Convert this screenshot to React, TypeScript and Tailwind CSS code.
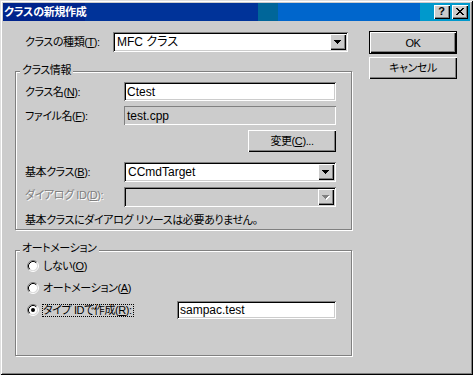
import React from "react";

const raised =
  "bg-[#cccccc] shadow-[inset_1px_1px_0_#ffffff,inset_-1px_-1px_0_#000000,inset_-2px_-2px_0_#808080]";
const sunken =
  "shadow-[inset_1px_1px_0_#808080,inset_-1px_-1px_0_#ffffff,inset_2px_2px_0_#000000,inset_-2px_-2px_0_#cccccc]";

function Arrow({ disabled }: { disabled?: boolean }) {
  const c = disabled ? "#808080" : "#000000";
  return (
    <svg width="8" height="5" viewBox="0 0 8 5" shapeRendering="crispEdges">
      {disabled && (
        <g fill="#ffffff">
          <rect x="1" y="1" width="7" height="1" />
          <rect x="2" y="2" width="5" height="1" />
          <rect x="3" y="3" width="3" height="1" />
          <rect x="4" y="4" width="1" height="1" />
        </g>
      )}
      <g fill={c}>
        <rect x="0" y="0" width="7" height="1" />
        <rect x="1" y="1" width="5" height="1" />
        <rect x="2" y="2" width="3" height="1" />
        <rect x="3" y="3" width="1" height="1" />
      </g>
    </svg>
  );
}

function Combo({
  width,
  text,
  disabled,
}: {
  width: string;
  text?: string;
  disabled?: boolean;
}) {
  return (
    <div
      className={`${width} h-[20px] flex items-center p-[2px] ${sunken} ${
        disabled ? "bg-[#cccccc]" : "bg-white"
      }`}
    >
      <div className="flex-1 pl-[2px] leading-[14px] text-[12px] tracking-normal text-black">{text}</div>
      <div className={`w-[16px] h-[16px] flex items-center justify-center ${raised}`}>
        <Arrow disabled={disabled} />
      </div>
    </div>
  );
}

function Edit({
  width,
  text,
  readOnly,
  height = "h-[19px]",
}: {
  width: string;
  text: string;
  readOnly?: boolean;
  height?: string;
}) {
  return (
    <div
      className={`${width} ${height} flex items-center pl-[3px] leading-[14px] text-[12px] tracking-normal ${
        readOnly
          ? "bg-[#cccccc] shadow-[inset_1px_1px_0_#808080,inset_-1px_-1px_0_#ffffff]"
          : `bg-white ${sunken}`
      }`}
    >
      {text}
    </div>
  );
}

function Radio({ checked }: { checked?: boolean }) {
  return (
    <svg width="12" height="12" viewBox="0 0 12 12" className="shrink-0">
      <circle cx="6" cy="6" r="4.2" fill="#ffffff" />
      <path d="M2.11 9.89 A5.5 5.5 0 0 1 9.89 2.11" stroke="#808080" fill="none" strokeWidth="1" />
      <path d="M9.89 2.11 A5.5 5.5 0 0 1 2.11 9.89" stroke="#ffffff" fill="none" strokeWidth="1" />
      <path d="M2.82 9.18 A4.5 4.5 0 0 1 9.18 2.82" stroke="#000000" fill="none" strokeWidth="1" />
      <path d="M9.18 2.82 A4.5 4.5 0 0 1 2.82 9.18" stroke="#dfdfdf" fill="none" strokeWidth="1" />
      {checked && <circle cx="6" cy="6" r="2" fill="#000000" />}
    </svg>
  );
}

export default function App() {
  return (
    <div className="w-[473px] h-[375px] bg-[#cccccc] p-[3px] text-[11px] tracking-[-0.4px] text-black font-['Liberation_Sans','Noto_Sans_CJK_JP',sans-serif] [font-feature-settings:'palt'] shadow-[inset_1px_1px_0_#dfdfdf,inset_-1px_-1px_0_#000000,inset_2px_2px_0_#ffffff,inset_-2px_-2px_0_#808080] select-none">
      {/* Title bar */}
      <div className="h-[18px] flex items-center bg-[linear-gradient(to_right,#00248c_82px,#003399_82px,#003399_255px,#006699_255px,#006699_275px,#0066cc_275px,#0066cc_417px,#0099cc_417px)]">
        <div className="pl-[1px] font-bold text-white text-[11px] leading-[14px] tracking-[-0.3px]">
          クラスの新規作成
        </div>
        <div className="ml-auto flex gap-[2px] pr-[2px]">
          <div className={`w-[16px] h-[14px] flex items-center justify-center ${raised}`}>
            <span className="font-['Liberation_Sans',sans-serif] font-bold text-[11px] leading-[11px] -mt-[1px] -ml-[1px]">
              ?
            </span>
          </div>
          <div className={`w-[16px] h-[14px] flex items-center justify-center ${raised}`}>
            <svg width="8" height="7" viewBox="0 0 8 7" shapeRendering="crispEdges" className="-mt-[1px] -ml-[1px]">
              <g fill="#000">
                <rect x="0" y="0" width="2" height="1" />
                <rect x="6" y="0" width="2" height="1" />
                <rect x="1" y="1" width="2" height="1" />
                <rect x="5" y="1" width="2" height="1" />
                <rect x="2" y="2" width="4" height="1" />
                <rect x="3" y="3" width="2" height="1" />
                <rect x="2" y="4" width="4" height="1" />
                <rect x="1" y="5" width="2" height="1" />
                <rect x="5" y="5" width="2" height="1" />
                <rect x="0" y="6" width="2" height="1" />
                <rect x="6" y="6" width="2" height="1" />
              </g>
            </svg>
          </div>
        </div>
      </div>

      {/* Body */}
      <div className="flex">
        <div className="ml-[12px] w-[338px] flex flex-col">
          <div className="mt-[11px] h-[20px] flex items-center">
            <div className="w-[98px] pl-[10px] leading-[14px]">
              クラスの種類(<u className="underline-offset-1">T</u>):
            </div>
            <Combo width="w-[235px]" text="MFC クラス" />
          </div>

          {/* Group 1 */}
          <div className="relative mt-[19px] w-[337px] h-[159px] border border-[#808080] shadow-[1px_1px_0_#ffffff,inset_1px_1px_0_#ffffff]">
            <div className="absolute left-[4px] -top-[9px] px-[2px] bg-[#cccccc] leading-[14px]">
              クラス情報
            </div>
            <div className="w-[320px] pl-[9px] flex flex-col">
              <div className="mt-[10px] flex items-center">
                <div className="w-[99px] leading-[14px]">
                  クラス名(<u className="underline-offset-1">N</u>):
                </div>
                <Edit width="w-[212px]" text="Ctest" />
              </div>
              <div className="mt-[5px] flex items-center">
                <div className="w-[99px] leading-[14px]">
                  ファイル名(<u className="underline-offset-1">F</u>):
                </div>
                <Edit width="w-[212px]" text="test.cpp" readOnly />
              </div>
              <div className="mt-[5px] flex justify-end">
                <div className={`w-[88px] h-[22px] flex items-center justify-center leading-[14px] ${raised}`}>
                  変更(<u className="underline-offset-1">C</u>)...
                </div>
              </div>
              <div className="mt-[10px] flex items-center">
                <div className="w-[99px] leading-[14px]">
                  基本クラス(<u className="underline-offset-1">B</u>):
                </div>
                <Combo width="w-[212px]" text="CCmdTarget" />
              </div>
              <div className="mt-[5px] flex items-start">
                <div className="w-[99px] mt-[1px] leading-[14px] text-[#808080] [text-shadow:1px_1px_0_#ffffff]">
                  ダイアログ ID(<u className="underline-offset-1">D</u>):
                </div>
                <Combo width="w-[212px]" disabled />
              </div>
              <div className="mt-[6px] leading-[14px] whitespace-nowrap">
                基本クラスにダイアログ リソースは必要ありません。
              </div>
            </div>
          </div>

          {/* Group 2 */}
          <div className="relative mt-[20px] w-[337px] h-[106px] border border-[#808080] shadow-[1px_1px_0_#ffffff,inset_1px_1px_0_#ffffff]">
            <div className="absolute left-[4px] -top-[10px] px-[2px] bg-[#cccccc] leading-[14px]">
              オートメーション
            </div>
            <div className="pl-[11px] pt-[9px] flex flex-col">
              <div className="h-[12px] flex items-center">
                <Radio />
                <div className="ml-[4px] leading-[14px]">
                  しない(<u className="underline-offset-1">O</u>)
                </div>
              </div>
              <div className="mt-[10px] h-[12px] flex items-center">
                <Radio />
                <div className="ml-[4px] leading-[14px]">
                  オートメーション(<u className="underline-offset-1">A</u>)
                </div>
              </div>
              <div className="mt-[10px] h-[12px] flex items-center">
                <Radio checked />
                <div className="w-[138px] shrink-0 flex items-center">
                  <div className="ml-[3px] h-[13px] pr-[1px] flex items-center border border-dotted border-black leading-[12px] whitespace-nowrap">
                    タイプ IDで作成(<u className="underline-offset-1">R</u>):
                  </div>
                </div>
                <Edit width="w-[159px]" height="h-[18px]" text="sampac.test" />
              </div>
            </div>
          </div>
        </div>

        {/* Buttons */}
        <div className="ml-[16px] w-[88px] flex flex-col">
          <div className="mt-[10px] h-[23px] border border-black">
            <div className={`w-full h-full flex items-center justify-center leading-[14px] ${raised}`}>
              OK
            </div>
          </div>
          <div className={`mt-[3px] h-[22px] flex items-center justify-center leading-[14px] ${raised}`}>
            キャンセル
          </div>
        </div>
      </div>
    </div>
  );
}
